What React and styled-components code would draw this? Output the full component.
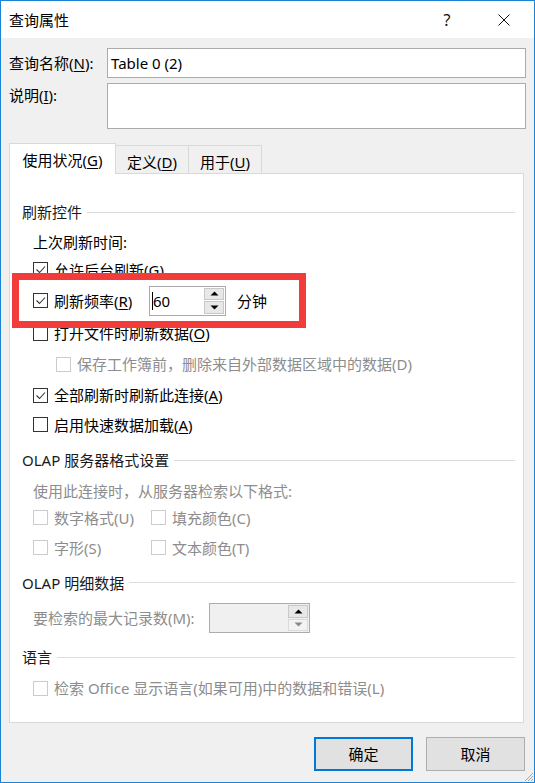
import React from "react";
import styled, { createGlobalStyle } from "styled-components";

const FONT = `"Noto Sans", "Noto Sans CJK SC", sans-serif`;

const GlobalStyle = createGlobalStyle`
  html, body { margin: 0; padding: 0; background: #ffffff; }
  body { font-family: ${FONT}; }
  * { box-sizing: border-box; }
`;

const Window = styled.div`
  position: relative;
  width: 535px;
  height: 783px;
  border: 1px solid #1883d7;
  background: #f0f0f0;
  display: flex;
  flex-direction: column;
  font-family: ${FONT};
  font-size: 15px;
  line-height: 20px;
  color: #000;
  overflow: hidden;
`;

const TitleBar = styled.div`
  height: 37px;
  flex: none;
  background: #ffffff;
  display: flex;
  align-items: center;
  padding: 0 24px 0 8px;
`;

const Title = styled.div`
  flex: 1;
  font-size: 15px;
`;

const HelpGlyph = styled.span`
  width: 20px;
  text-align: center;
  font-size: 16px;
  color: #111;
`;

const CloseGlyph = styled.svg`
  margin-left: 41px;
  display: block;
`;

const Body = styled.div`
  flex: 1;
  display: flex;
  flex-direction: column;
  padding: 10px 8px 0 8px;
`;

const FieldRow = styled.div`
  display: grid;
  grid-template-columns: 98px 1fr;
  align-items: ${(p) => (p.$top ? "start" : "center")};
  margin-top: ${(p) => p.$mt || 0}px;
`;

const FieldLabel = styled.div`
  padding-top: ${(p) => p.$pt || 0}px;
  white-space: nowrap;
`;

const TextBox = styled.div`
  height: ${(p) => p.$h}px;
  border: 1px solid #ababab;
  background: #ffffff;
  padding: 0 3px;
  display: flex;
  align-items: ${(p) => (p.$top ? "flex-start" : "center")};
`;

const U = styled.span`
  text-decoration: underline;
  text-underline-offset: 2px;
`;

const TabStrip = styled.div`
  margin-top: 14px;
  height: 31px;
  margin-bottom: -1px;
  display: flex;
  align-items: flex-end;
  position: relative;
  z-index: 1;
`;

const Tab = styled.div`
  width: ${(p) => p.$w}px;
  height: ${(p) => (p.$active ? 31 : 28)}px;
  margin-left: ${(p) => (p.$first ? 0 : -1)}px;
  margin-bottom: ${(p) => (p.$active ? 0 : 1)}px;
  background: ${(p) => (p.$active ? "#ffffff" : "#f0f0f0")};
  border: 1px solid #d9d9d9;
  border-bottom: none;
  display: flex;
  align-items: center;
  justify-content: center;
  padding-top: ${(p) => (p.$active ? 2 : 4)}px;
  position: relative;
  z-index: ${(p) => (p.$active ? 2 : 1)};
  white-space: nowrap;
`;

const Panel = styled.div`
  width: 515px;
  height: 550px;
  flex: none;
  border: 1px solid #d9d9d9;
  background: #ffffff;
  padding: 23px 8px 0 12px;
  display: flex;
  flex-direction: column;
`;

const SectionHeader = styled.div`
  height: ${(p) => p.$h}px;
  flex: none;
  display: flex;
  align-items: center;
  color: #1a1a1a;
  white-space: nowrap;
`;

const SectionLine = styled.div`
  flex: 1;
  height: 1px;
  background: #dcdcdc;
  margin-left: 5px;
`;

const Row = styled.div`
  height: ${(p) => p.$h}px;
  flex: none;
  display: flex;
  align-items: center;
  margin-left: ${(p) => p.$indent ?? 11}px;
  color: ${(p) => (p.$disabled ? "#8d8d8d" : "#000")};
  white-space: nowrap;
`;

const GridRow = styled.div`
  height: ${(p) => p.$h}px;
  flex: none;
  display: grid;
  grid-template-columns: 118px auto;
  align-items: center;
  margin-left: 11px;
`;

const CheckLabel = styled.label`
  display: flex;
  align-items: center;
  gap: 6px;
  width: ${(p) => (p.$w ? `${p.$w}px` : "auto")};
  color: ${(p) => (p.$disabled ? "#8d8d8d" : "#000")};
  white-space: nowrap;
`;

const Box = styled.span`
  width: 15px;
  height: 15px;
  flex: none;
  border: 1px solid ${(p) => (p.$disabled ? "#cccccc" : "#333333")};
  background: #ffffff;
  display: flex;
  align-items: center;
  justify-content: center;
`;

const Spinner = styled.div`
  width: ${(p) => p.$w}px;
  height: 30px;
  flex: none;
  border: 1px solid #ababab;
  background: ${(p) => (p.$disabled ? "#f0f0f0" : "#ffffff")};
  display: flex;
  margin-left: ${(p) => p.$ml || 0}px;
`;

const SpinField = styled.div`
  flex: 1;
  display: flex;
  align-items: center;
  padding-left: 2px;
`;

const Caret = styled.span`
  width: 1px;
  height: 18px;
  background: #000;
  margin-right: 0px;
`;

const SpinColumn = styled.div`
  width: 21px;
  display: flex;
  flex-direction: column;
  padding: 1px 1px 1px 0;
  gap: 1px;
`;

const SpinButton = styled.div`
  flex: 1;
  background: ${(p) => (p.$faded ? "#f3f3f3" : "#e8e8e8")};
  border: 1px solid ${(p) => (p.$faded ? "#dadada" : "#c8c8c8")};
  display: flex;
  align-items: center;
  justify-content: center;
`;

const Unit = styled.span`
  margin-left: 11px;
`;

const FixedLabel = styled.span`
  width: ${(p) => p.$w}px;
  flex: none;
`;

const ButtonRow = styled.div`
  margin-top: 14px;
  display: flex;
  justify-content: flex-end;
  gap: 13px;
  padding-right: 1px;
`;

const Button = styled.div`
  width: 99px;
  height: 34px;
  background: #e1e1e1;
  border: ${(p) => (p.$default ? "2px solid #0078d7" : "1px solid #adadad")};
  display: flex;
  align-items: center;
  justify-content: center;
`;

const Annotation = styled.div`
  position: absolute;
  left: 11px;
  top: 272px;
  width: 294px;
  height: 55px;
  border: 7px solid #f23b3b;
  pointer-events: none;
`;

const Grip = styled.svg`
  position: absolute;
  right: 0;
  bottom: 0;
`;

function Check({ checked, disabled }) {
  return (
    <Box $disabled={disabled}>
      {checked && (
        <svg width="13" height="13" viewBox="0 0 13 13">
          <polyline points="2.5,6.5 5.5,9.5 11,3.5" fill="none" stroke="#333" strokeWidth="1.1" />
        </svg>
      )}
    </Box>
  );
}

function CheckItem({ checked, disabled, w, children }) {
  return (
    <CheckLabel $disabled={disabled} $w={w}>
      <Check checked={checked} disabled={disabled} />
      <span>{children}</span>
    </CheckLabel>
  );
}

function Arrow({ up, color }) {
  return (
    <svg width="9" height="5" viewBox="0 0 9 5">
      {up ? <polygon points="0.5,4.5 4.5,0.5 8.5,4.5" fill={color} /> : <polygon points="0.5,0.5 8.5,0.5 4.5,4.5" fill={color} />}
    </svg>
  );
}

function Section({ h, children }) {
  return (
    <SectionHeader $h={h}>
      <span>{children}</span>
      <SectionLine />
    </SectionHeader>
  );
}

export default function App() {
  return (
    <>
      <GlobalStyle />
      <Window>
        <TitleBar>
          <Title>查询属性</Title>
          <HelpGlyph>?</HelpGlyph>
          <CloseGlyph width="12" height="12" viewBox="0 0 12 12">
            <path d="M0.5 0.5 L11.5 11.5 M11.5 0.5 L0.5 11.5" stroke="#111" strokeWidth="1" fill="none" />
          </CloseGlyph>
        </TitleBar>
        <Body>
          <FieldRow>
            <FieldLabel>
              查询名称(<U>N</U>):
            </FieldLabel>
            <TextBox $h={30}>Table 0 (2)</TextBox>
          </FieldRow>
          <FieldRow $top $mt={5}>
            <FieldLabel $pt={2}>
              说明(<U>I</U>):
            </FieldLabel>
            <TextBox $h={46} $top />
          </FieldRow>

          <TabStrip>
            <Tab $active $first $w={107}>
              使用状况(<U>G</U>)
            </Tab>
            <Tab $w={74}>
              定义(<U>D</U>)
            </Tab>
            <Tab $w={74}>
              用于(<U>U</U>)
            </Tab>
          </TabStrip>
          <Panel>
            <Section h={30}>刷新控件</Section>
            <Row $h={29}>上次刷新时间:</Row>
            <Row $h={27}>
              <CheckItem checked>
                允许后台刷新(<U>G</U>)
              </CheckItem>
            </Row>
            <Row $h={35}>
              <CheckItem checked w={116}>
                刷新频率(<U>R</U>)
              </CheckItem>
              <Spinner $w={77}>
                <SpinField>
                  <Caret />
                  <span>60</span>
                </SpinField>
                <SpinColumn>
                  <SpinButton>
                    <Arrow up color="#000" />
                  </SpinButton>
                  <SpinButton>
                    <Arrow color="#000" />
                  </SpinButton>
                </SpinColumn>
              </Spinner>
              <Unit>分钟</Unit>
            </Row>
            <Row $h={30}>
              <CheckItem>
                打开文件时刷新数据(<U>O</U>)
              </CheckItem>
            </Row>
            <Row $h={32} $indent={34}>
              <CheckItem disabled>保存工作簿前，删除来自外部数据区域中的数据(D)</CheckItem>
            </Row>
            <Row $h={30}>
              <CheckItem checked>
                全部刷新时刷新此连接(<U>A</U>)
              </CheckItem>
            </Row>
            <Row $h={29}>
              <CheckItem>
                启用快速数据加载(<U>A</U>)
              </CheckItem>
            </Row>

            <Section h={42}>OLAP 服务器格式设置</Section>
            <Row $h={20} $disabled>
              使用此连接时，从服务器检索以下格式:
            </Row>
            <GridRow $h={33}>
              <CheckItem disabled>数字格式(U)</CheckItem>
              <CheckItem disabled>填充颜色(C)</CheckItem>
            </GridRow>
            <GridRow $h={27}>
              <CheckItem disabled>字形(S)</CheckItem>
              <CheckItem disabled>文本颜色(T)</CheckItem>
            </GridRow>

            <Section h={43}>OLAP 明细数据</Section>
            <Row $h={28} $disabled>
              <FixedLabel $w={176}>要检索的最大记录数(M):</FixedLabel>
              <Spinner $w={101} $disabled>
                <SpinField />
                <SpinColumn>
                  <SpinButton>
                    <Arrow up color="#000" />
                  </SpinButton>
                  <SpinButton $faded>
                    <Arrow color="#8a8a8a" />
                  </SpinButton>
                </SpinColumn>
              </Spinner>
            </Row>

            <Section h={50}>语言</Section>
            <Row $h={12}>
              <CheckItem disabled>检索 Office 显示语言(如果可用)中的数据和错误(L)</CheckItem>
            </Row>
          </Panel>

          <ButtonRow>
            <Button $default>确定</Button>
            <Button>取消</Button>
          </ButtonRow>
        </Body>
        <Annotation />
        <Grip width="11" height="11" viewBox="0 0 11 11">
          <path d="M10 2 L2 10 M10 5 L5 10 M10 8 L8 10" stroke="#a6a6a6" strokeWidth="1" />
        </Grip>
      </Window>
    </>
  );
}
